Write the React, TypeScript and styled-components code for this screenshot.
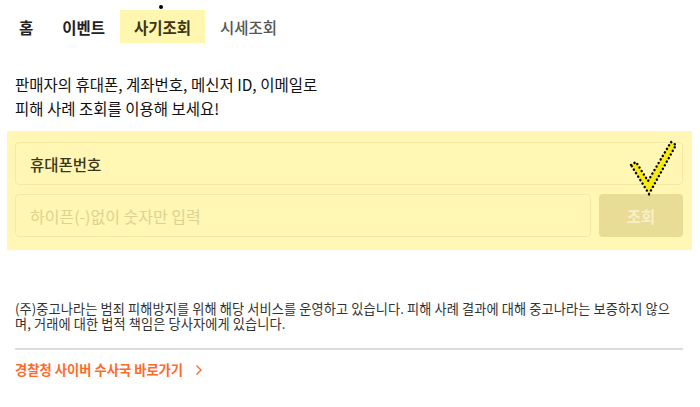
import React from "react";
import styled, { createGlobalStyle } from "styled-components";

const GlobalStyle = createGlobalStyle`
  html, body {
    margin: 0;
    padding: 0;
    background: #ffffff;
  }
  body {
    font-family: "Noto Sans CJK KR", "Noto Sans", sans-serif;
    color: #222;
  }
`;

const Page = styled.div`
  position: relative;
  width: 700px;
  height: 407px;
  box-sizing: border-box;
  padding: 10px 17px 0 15px;
  overflow: hidden;
`;

const Tabs = styled.nav`
  display: flex;
  align-items: center;
  gap: 1px;
  margin-left: -10px;
`;

const Tab = styled.a<{ $active?: boolean; $muted?: boolean }>`
  display: flex;
  align-items: center;
  height: 33px;
  padding: 0 14px;
  font-size: 15.5px;
  font-weight: ${(p) => (p.$muted ? 500 : 700)};
  color: ${(p) => (p.$muted ? "#555" : p.$active ? "#3b3717" : "#222")};
  background: ${(p) => (p.$active ? "#fff6b0" : "transparent")};
  cursor: pointer;
`;

const Heading = styled.p`
  margin: 29px 0 0;
  font-size: 15.5px;
  font-weight: 400;
  line-height: 24px;
  color: #111;
`;

const FormPanel = styled.form`
  display: flex;
  flex-direction: column;
  gap: 9px;
  margin: 11px -9px 0 -8px;
  padding: 11px 9px 13px 8px;
  background: #fff7b3;
`;

const Field = styled.div`
  display: flex;
  align-items: center;
  height: 43px;
  box-sizing: border-box;
  padding: 0 14px;
  border: 1px solid #f4e9a3;
  border-radius: 4px;
  font-size: 15.5px;
  font-weight: 500;
  color: #3a361c;
`;

const InputRow = styled.div`
  display: flex;
  gap: 8px;
`;

const Input = styled.input`
  flex: 1;
  height: 43px;
  box-sizing: border-box;
  padding: 0 14px;
  border: 1px solid #f4e9a3;
  border-radius: 4px;
  background: transparent;
  font-family: inherit;
  font-size: 16px;
  outline: none;

  &::placeholder {
    color: #dcd290;
  }
`;

const SearchButton = styled.button`
  width: 84px;
  height: 43px;
  border: none;
  border-radius: 4px;
  background: #e9dc97;
  color: #f7efc4;
  font-family: inherit;
  font-size: 15.5px;
  font-weight: 700;
`;

const Notice = styled.p`
  margin: 52px 0 0;
  font-size: 13.2px;
  letter-spacing: 0.1px;
  line-height: 14.5px;
  color: #333;
`;

const Divider = styled.hr`
  margin: 17px 0 0;
  border: none;
  border-top: 2px solid #dcdcdc;
`;

const PoliceLink = styled.a`
  display: inline-flex;
  align-items: center;
  gap: 12px;
  margin-top: 10px;
  font-size: 13.3px;
  font-weight: 700;
  color: #ff6a2b;
  cursor: pointer;
`;

const Check = styled.svg`
  position: absolute;
  left: 626px;
  top: 138px;
`;

const Dot = styled.span`
  position: absolute;
  left: 159px;
  top: 5px;
  width: 4px;
  height: 4px;
  border-radius: 50%;
  background: #000;
`;

export default function App() {
  return (
    <>
      <GlobalStyle />
      <Page>
        <Tabs>
          <Tab>홈</Tab>
          <Tab>이벤트</Tab>
          <Tab $active>사기조회</Tab>
          <Tab $muted>시세조회</Tab>
        </Tabs>
        <Heading>
          판매자의 휴대폰, 계좌번호, 메신저 ID, 이메일로
          <br />
          피해 사례 조회를 이용해 보세요!
        </Heading>
        <FormPanel onSubmit={(e) => e.preventDefault()}>
          <Field>휴대폰번호</Field>
          <InputRow>
            <Input placeholder="하이픈(-)없이 숫자만 입력" />
            <SearchButton type="submit">조회</SearchButton>
          </InputRow>
        </FormPanel>
        <Notice>
          (주)중고나라는 범죄 피해방지를 위해 해당 서비스를 운영하고 있습니다. 피해 사례 결과에 대해 중고나라는 보증하지 않으며, 거래에 대한 법적 책임은 당사자에게 있습니다.
        </Notice>
        <Divider />
        <PoliceLink>
          경찰청 사이버 수사국 바로가기
          <svg width="8" height="12" viewBox="0 0 8 12">
            <path d="M1.5 1.5 L6 6 L1.5 10.5" fill="none" stroke="#ff6a2b" strokeWidth="1.4" />
          </svg>
        </PoliceLink>
        <Dot />
        <Check width="54" height="60" viewBox="0 0 54 60">
          <polygon
            points="5,27 10,24 22,43 45,4 50,7 23,56"
            fill="#f6ea12"
            stroke="#000"
            strokeWidth="2.4"
            strokeDasharray="0.1 4"
            strokeLinecap="round"
          />
        </Check>
      </Page>
    </>
  );
}
